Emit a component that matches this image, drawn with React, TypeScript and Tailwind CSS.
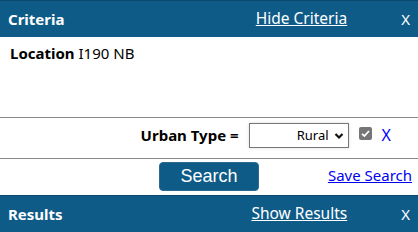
import React from "react";

function Header({ title, link }: { title: string; link: string }) {
  return (
    <div className="h-[37px] flex items-center bg-[#0f5b88] border-t border-[#0b4870] text-white pl-2 pr-2 text-[15px]">
      <span className="font-bold flex-1">{title}</span>
      <span className="underline mr-[54px] text-[15.5px]">{link}</span>
      <span>X</span>
    </div>
  );
}

export default function App() {
  return (
    <div className="w-[418px] h-[232px] overflow-hidden bg-white font-['Noto_Sans',sans-serif] text-black">
      <Header title="Criteria" link="Hide Criteria" />
      <div className="h-[80px] pl-[10px] pt-[6px] text-[15px] leading-5">
        <span className="font-bold">Location</span> I190 NB
      </div>
      <div className="h-px bg-[#8a8a8a]" />
      <div className="h-[40px] flex items-center justify-end pr-[27px] pb-[5px] gap-[10px]">
        <span className="font-bold text-[15px]">Urban Type =</span>
        <div className="w-[100px] h-[25px] border border-[#767676] shadow-[0_0_3px_rgba(0,0,0,0.15)] flex items-center justify-end pr-[4px] text-[13px]">
          <span>Rural</span>
          <svg width="10" height="8" viewBox="0 0 10 8" className="ml-[5px]">
            <path d="M1.5 2 L5 5.5 L8.5 2" fill="none" stroke="#111" strokeWidth="2.2" />
          </svg>
        </div>
        <div className="w-[13px] h-[13px] -mt-[4px] rounded-[2px] bg-[#767676] flex items-center justify-center">
          <svg width="11" height="11" viewBox="0 0 11 11">
            <path d="M2 5.8 L4.4 8 L9 3" fill="none" stroke="#fff" strokeWidth="1.8" />
          </svg>
        </div>
        <span className="text-[#0000ff] text-[16px] leading-none -mt-[2px]">X</span>
      </div>
      <div className="h-px bg-[#8a8a8a]" />
      <div className="h-[36px] grid grid-cols-[1fr_auto_1fr] items-center">
        <div />
        <button className="w-[100px] h-[29px] -mt-[2px] rounded-[4px] bg-[#0f5b88] border border-[#2a6a93] text-white text-[18px] font-['Liberation_Sans',sans-serif] leading-none">
          Search
        </button>
        <div className="flex justify-end pr-[6px] -mt-[4px]">
          <span className="text-[#0000ee] underline text-[15px]">Save Search</span>
        </div>
      </div>
      <Header title="Results" link="Show Results" />
    </div>
  );
}
